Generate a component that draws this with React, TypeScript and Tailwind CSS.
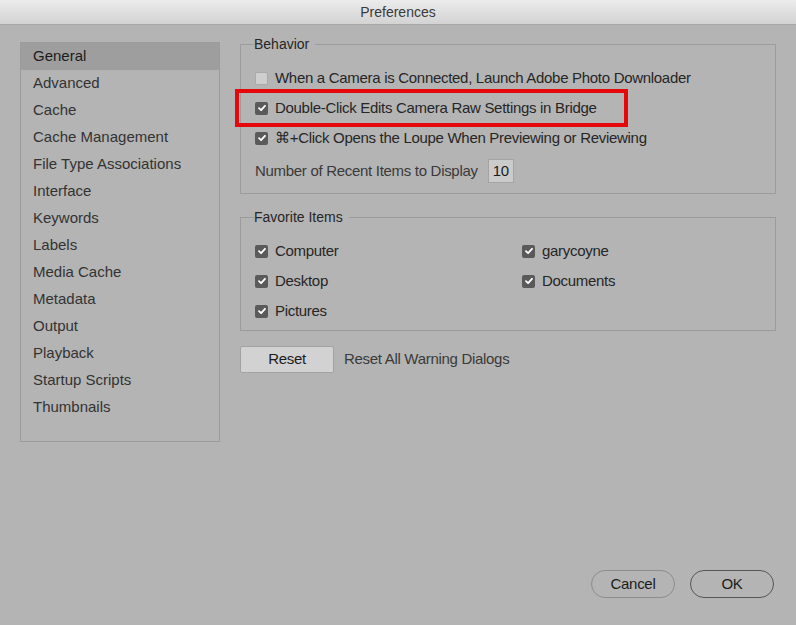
const SECTIONS = [
  'General',
  'Advanced',
  'Cache',
  'Cache Management',
  'File Type Associations',
  'Interface',
  'Keywords',
  'Labels',
  'Media Cache',
  'Metadata',
  'Output',
  'Playback',
  'Startup Scripts',
  'Thumbnails',
]

function Check({ checked = true }: { checked?: boolean }) {
  if (!checked) {
    return <span className="h-[13px] w-[13px] shrink-0 rounded-[2px] border border-[#a9a9a9] bg-[#cecece]" />
  }
  return (
    <span className="flex h-[13px] w-[13px] shrink-0 items-center justify-center rounded-[2px] bg-[#5a5a5a]">
      <svg width="10" height="10" viewBox="0 0 10 10" fill="none">
        <path d="M2 5.2 4.1 7.2 8 2.8" stroke="#fff" strokeWidth="1.8" strokeLinecap="round" strokeLinejoin="round" />
      </svg>
    </span>
  )
}

function Option({ label, checked = true }: { label: string; checked?: boolean }) {
  return (
    <div className="flex h-[30px] items-center gap-[7px]">
      <Check checked={checked} />
      <span>{label}</span>
    </div>
  )
}

function Group({ title, className, children }: { title: string; className: string; children: React.ReactNode }) {
  return (
    <fieldset className={`border border-[#9c9c9c] pl-[14px] ${className}`}>
      <legend className="-ml-[1px] pr-[6px] text-[14px] leading-[16px] tracking-normal text-[#262626]">{title}</legend>
      {children}
    </fieldset>
  )
}

export default function App() {
  return (
    <div
      className="flex h-[625px] w-[796px] flex-col overflow-hidden bg-[#b4b4b4] text-[15px] tracking-[-0.3px] text-[#262626]"
      style={{ fontFamily: '"Liberation Sans", Arial, sans-serif' }}
    >
      <div className="flex h-[25px] shrink-0 items-center justify-center border-b border-[#a8a8a8] bg-gradient-to-b from-[#ececec] to-[#d3d3d3] text-[14px] tracking-normal text-[#3a3a3a]">
        Preferences
      </div>

      <div className="flex flex-1 gap-[20px] pl-[20px] pt-[17px]">
        <ul className="h-[400px] w-[200px] shrink-0 border border-[#9c9c9c] bg-[#b4b4b4] tracking-normal">
          {SECTIONS.map((s, i) => (
            <li
              key={s}
              className={`flex h-[27px] items-center pl-[12px] ${i === 0 ? 'bg-[#9e9e9e] text-[#1c1c1c]' : 'text-[#333]'}`}
            >
              {s}
            </li>
          ))}
        </ul>

        <div className="flex w-[536px] flex-col">
          <Group title="Behavior" className="-mt-[6px] h-[158px] pt-[11px]">
            <Option label="When a Camera is Connected, Launch Adobe Photo Downloader" checked={false} />
            <div className="relative">
              <div className="absolute -left-[20px] -top-[4px] h-[38px] w-[393px] border-[4px] border-[#e4080a]" />
              <Option label="Double-Click Edits Camera Raw Settings in Bridge" />
            </div>
            <Option label="⌘+Click Opens the Loupe When Previewing or Reviewing" />
            <div className="mt-[3px] flex h-[30px] items-center gap-[10px] text-[#3a3a3a]">
              <span>Number of Recent Items to Display</span>
              <span className="flex h-[24px] w-[26px] items-center justify-center border border-[#a4a4a4] bg-[#cbcbcb] text-[#1c1c1c]">
                10
              </span>
            </div>
          </Group>

          <Group title="Favorite Items" className="mt-[15px] h-[122px] pt-[11px]">
            <div className="grid grid-cols-[267px_1fr]">
              <Option label="Computer" />
              <Option label="garycoyne" />
              <Option label="Desktop" />
              <Option label="Documents" />
              <Option label="Pictures" />
            </div>
          </Group>

          <div className="mt-[15px] flex items-center gap-[10px]">
            <button className="h-[27px] w-[94px] rounded-[2px] border border-[#a2a2a2] bg-[#d2d2d2] text-[15px] text-[#1c1c1c]">
              Reset
            </button>
            <span className="text-[#3a3a3a]">Reset All Warning Dialogs</span>
          </div>
        </div>
      </div>

      <div className="flex justify-end gap-[15px] pb-[27px] pr-[22px]">
        <button className="h-[28px] w-[84px] rounded-full border border-[#8c8c8c] text-[15px] text-[#1c1c1c]">Cancel</button>
        <button className="h-[28px] w-[84px] rounded-full border border-[#555] text-[15px] text-[#1c1c1c]">OK</button>
      </div>
    </div>
  )
}
